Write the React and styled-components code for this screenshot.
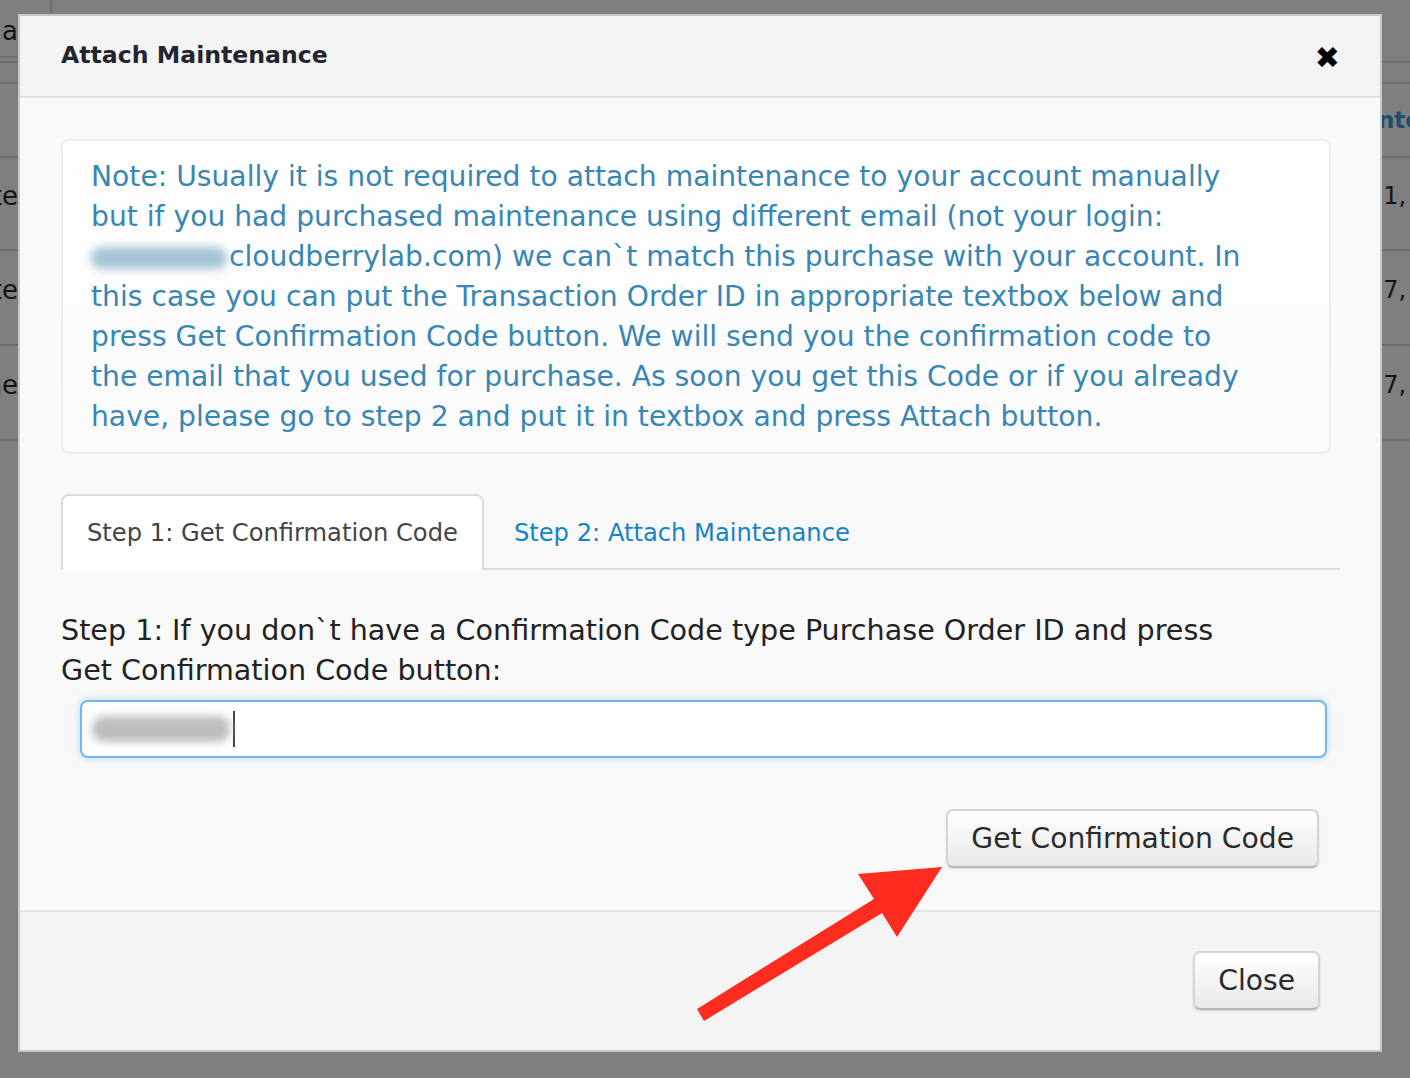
import React from 'react';
import styled, { createGlobalStyle } from 'styled-components';

const GlobalStyle = createGlobalStyle`
  html, body {
    margin: 0;
    padding: 0;
    background: #7f7f7f;
    font-family: "DejaVu Sans", Verdana, sans-serif;
  }
`;

const Page = styled.div`
  min-height: 1078px;
  background: #7f7f7f;
  color: #141414;
  font-size: 26px;
  overflow: hidden;
`;

const TopBar = styled.div`
  height: 61px;
  border-bottom: 2px solid #6e6e6e;
  display: flex;
  align-items: flex-start;
`;

const PageButton = styled.div`
  width: 54px;
  height: 58px;
  margin-left: -2px;
  border: 2px solid #6e6e6e;
  border-top: none;
  border-radius: 0 0 10px 0;
  box-sizing: border-box;
  display: flex;
  align-items: flex-end;
  padding: 0 0 10px 2px;
`;

const Spacer = styled.div`
  height: 19px;
  border-bottom: 2px solid #6e6e6e;
`;

const Row = styled.div`
  height: ${p => p.$h}px;
  border-bottom: 2px solid #6c6c6c;
  display: flex;
  align-items: center;
  justify-content: space-between;
  box-sizing: border-box;
  padding-bottom: ${p => p.$lift || 0}px;
`;

const EdgeCell = styled.div`
  width: ${p => p.$w}px;
  overflow: hidden;
  display: flex;
  justify-content: ${p => (p.$right ? 'flex-start' : 'flex-end')};
  white-space: nowrap;
  font-size: ${p => p.$size || 26}px;
  color: ${p => p.$color || '#141414'};
  font-weight: ${p => (p.$bold ? 'bold' : 'normal')};
`;

const Modal = styled.div`
  position: fixed;
  left: 18px;
  top: 14px;
  width: 1364px;
  height: 1038px;
  box-sizing: border-box;
  border: 2px solid #c6c6c6;
  background: #f9f9f9;
  display: flex;
  flex-direction: column;
`;

const Header = styled.div`
  height: 82px;
  box-sizing: border-box;
  flex: none;
  background: #f4f4f4;
  border-bottom: 2px solid #e2e2e2;
  display: flex;
  align-items: center;
  justify-content: space-between;
  padding: 0 40px 0 41px;
`;

const Title = styled.h1`
  margin: 0 0 2px;
  font-size: 23.6px;
  font-weight: bold;
  color: #222530;
`;

const CloseX = styled.span`
  font-size: 30px;
  line-height: 1;
  color: #000;
  margin-top: 4px;
`;

const Body = styled.div`
  flex: 1;
  padding: 41px 40px 40px 41px;
  display: flex;
  flex-direction: column;
`;

const Note = styled.div`
  margin-right: 9px;
  padding: 16px 28px 15px 28px;
  border: 2px solid #ececec;
  border-radius: 8px;
  background: linear-gradient(#ffffff, #fafafa);
  color: #3886b3;
  font-size: 28.2px;
  line-height: 40px;
  white-space: nowrap;
`;

const Blurred = styled.span`
  display: inline-block;
  width: 136px;
  height: 22px;
  margin: 0 2px -3px 0;
  border-radius: 11px;
  background: #a4c4d6;
  filter: blur(4px);
`;

const Tabs = styled.div`
  margin-top: 40px;
  display: flex;
  border-bottom: 2px solid #dcdcdc;
`;

const Tab = styled.div`
  height: 76px;
  box-sizing: border-box;
  padding: 0 ${p => (p.$active ? 24 : 28)}px;
  display: flex;
  align-items: center;
  font-size: 24.2px;
  color: ${p => (p.$active ? '#444' : '#1683c6')};
  background: ${p => (p.$active ? '#fff' : 'transparent')};
  border: 2px solid ${p => (p.$active ? '#dcdcdc' : 'transparent')};
  border-bottom: none;
  border-radius: 8px 8px 0 0;
  margin-bottom: -2px;
`;

const Label = styled.p`
  margin: 40px 0 0;
  font-size: 28.6px;
  line-height: 40px;
  color: #222;
`;

const InputBox = styled.div`
  margin: 10px 13px 0 19px;
  height: 58px;
  box-sizing: border-box;
  border: 2px solid #72b6ee;
  border-radius: 8px;
  background: #fff;
  box-shadow: 0 0 9px rgba(102, 175, 233, 0.45);
  display: flex;
  align-items: center;
  padding-left: 10px;
`;

const BlurredValue = styled.span`
  display: inline-block;
  width: 138px;
  height: 26px;
  border-radius: 12px;
  background: #bdbdbd;
  filter: blur(4px);
`;

const Caret = styled.span`
  width: 2px;
  height: 36px;
  background: #444;
  margin-left: 3px;
`;

const ButtonRow = styled.div`
  display: flex;
  justify-content: flex-end;
  margin: ${p => p.$top}px 21px 0 0;
`;

const Button = styled.button`
  height: 59px;
  padding: 0 23px;
  border: 2px solid #d4d4d4;
  border-bottom-color: #b8b8b8;
  border-radius: 7px;
  background: linear-gradient(#ffffff, #e9e9e9);
  box-shadow: 0 1px 2px rgba(0, 0, 0, 0.12);
  font-family: "DejaVu Sans", Verdana, sans-serif;
  font-size: 28.2px;
  color: #2b2b2b;
  cursor: pointer;
`;

const Footer = styled.div`
  height: 140px;
  flex: none;
  background: #f4f4f4;
  border-top: 2px solid #e4e4e4;
  padding: 39px 39px 0 41px;
  box-sizing: border-box;
`;

const Arrow = styled.svg`
  position: fixed;
  left: 0;
  top: 0;
  width: 1410px;
  height: 1078px;
  pointer-events: none;
`;

const rows = [
  { h: 93, left: 'Date', right: '21,' },
  { h: 95, left: 'Date', right: '27,' },
  { h: 95, left: 'Name', right: '27,' },
];

export default function App() {
  return (
    <>
      <GlobalStyle />
      <Page>
        <TopBar>
          <PageButton>a</PageButton>
        </TopBar>
        <Spacer />
        <Row $h={74}>
          <EdgeCell $w={18} />
          <EdgeCell $w={32} $right $bold $size={23} $color="#1d4f6f">
            nte
          </EdgeCell>
        </Row>
        {rows.map((r, i) => (
          <Row key={i} $h={r.h} $lift={16}>
            <EdgeCell $w={18}>{r.left}</EdgeCell>
            <EdgeCell $w={42} $right $size={24}>
              {r.right}
            </EdgeCell>
          </Row>
        ))}
      </Page>

      <Modal>
        <Header>
          <Title>Attach Maintenance</Title>
          <CloseX>✖</CloseX>
        </Header>
        <Body>
          <Note>
            Note: Usually it is not required to attach maintenance to your account manually
            <br />
            but if you had purchased maintenance using different email (not your login:
            <br />
            <Blurred />
            cloudberrylab.com) we can`t match this purchase with your account. In
            <br />
            this case you can put the Transaction Order ID in appropriate textbox below and
            <br />
            press Get Confirmation Code button. We will send you the confirmation code to
            <br />
            the email that you used for purchase. As soon you get this Code or if you already
            <br />
            have, please go to step 2 and put it in textbox and press Attach button.
          </Note>
          <Tabs>
            <Tab $active>Step 1: Get Confirmation Code</Tab>
            <Tab>Step 2: Attach Maintenance</Tab>
          </Tabs>
          <Label>
            Step 1: If you don`t have a Confirmation Code type Purchase Order ID and press
            <br />
            Get Confirmation Code button:
          </Label>
          <InputBox>
            <BlurredValue />
            <Caret />
          </InputBox>
          <ButtonRow $top={51}>
            <Button>Get Confirmation Code</Button>
          </ButtonRow>
        </Body>
        <Footer>
          <ButtonRow $top={0}>
            <Button>Close</Button>
          </ButtonRow>
        </Footer>
      </Modal>

      <Arrow viewBox="0 0 1410 1078">
        <polygon
          points="697,1009 874,899 858,874 942,867 897,937 882,913 704,1021"
          fill="#fe2b1f"
        />
      </Arrow>
    </>
  );
}
